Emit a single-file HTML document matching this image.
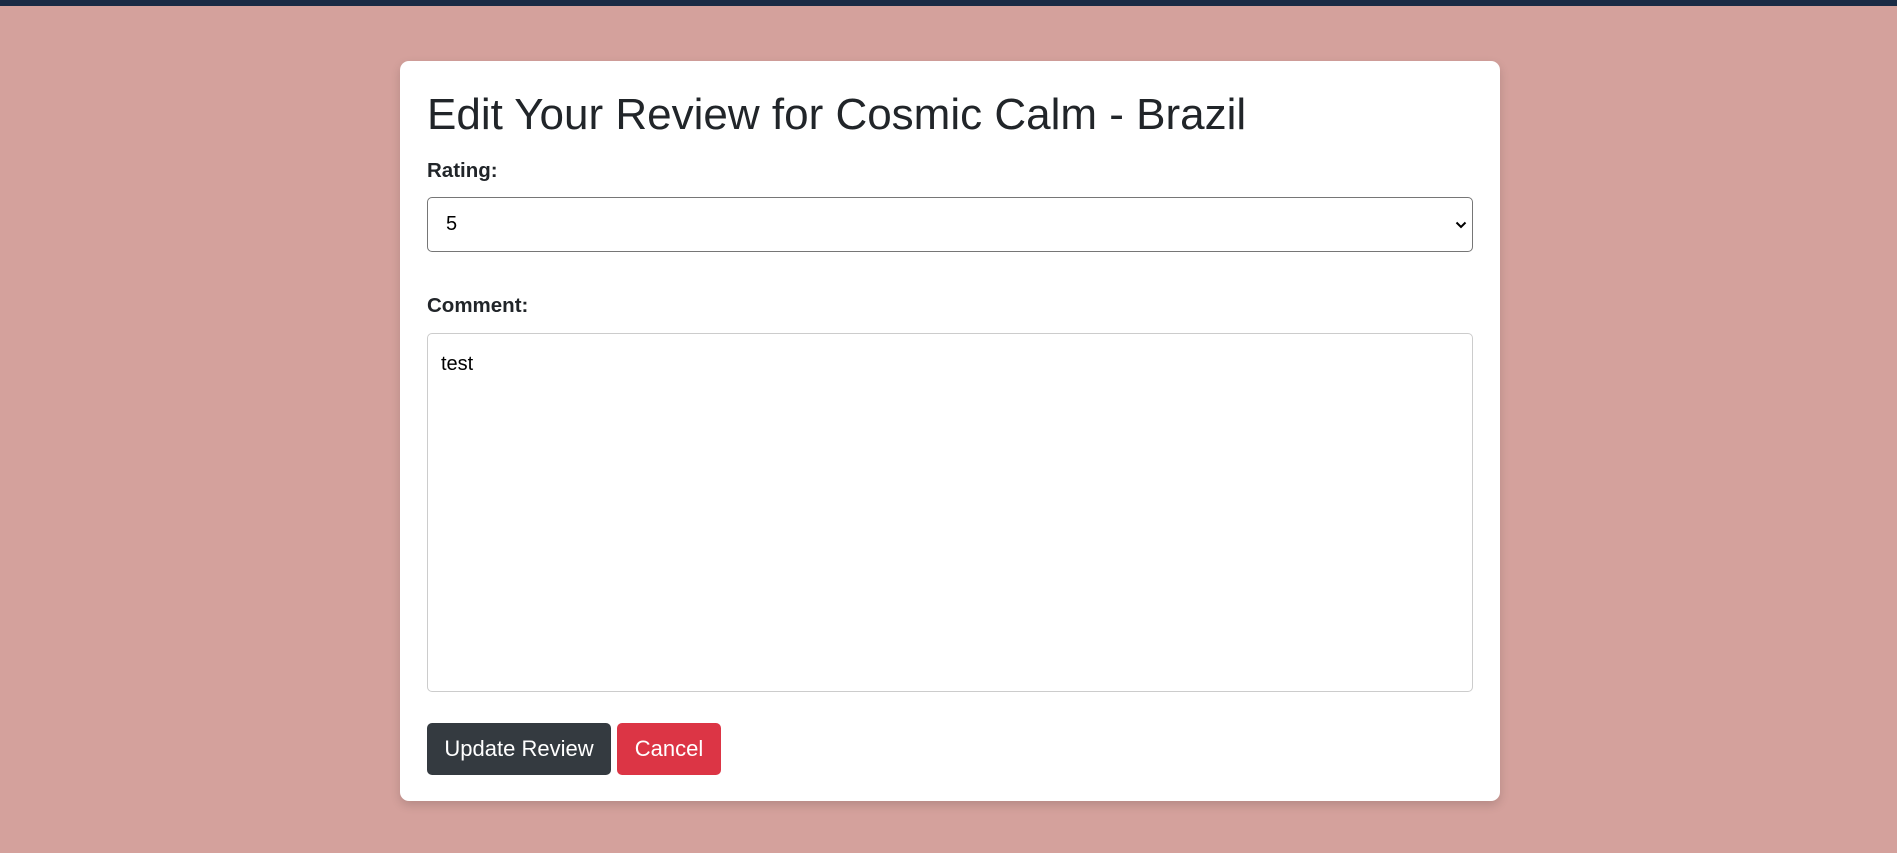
<!DOCTYPE html>
<html><head><style>
html,body{margin:0;padding:0;}
body{width:1897px;height:853px;background:#d4a19c;font-family:"Liberation Sans",Arial,sans-serif;color:#212529;position:relative;overflow:hidden;}
.top{position:absolute;left:0;top:0;width:1897px;height:6px;background:#1a2b45;}
.card{position:absolute;left:400px;top:61px;width:1100px;height:740px;background:#fff;border-radius:9px;box-shadow:0 4px 10px rgba(0,0,0,0.15);}
h1{position:absolute;left:27px;top:28px;margin:0;font-weight:400;font-size:44px;line-height:52px;white-space:nowrap;}
.lbl{position:absolute;left:27px;font-weight:700;font-size:20.5px;}
.sel{position:absolute;left:27px;top:136px;width:1046px;height:55px;border:1px solid #767676;border-radius:5px;box-sizing:border-box;}
.sel span{position:absolute;left:18px;top:15px;font-size:20px;color:#000;}
.sel svg{position:absolute;right:5px;top:23px;}
.ta{position:absolute;left:27px;top:272px;width:1046px;height:359px;border:1px solid #ccc;border-radius:5px;box-sizing:border-box;}
.ta span{position:absolute;left:13px;top:19px;font-size:20px;color:#000;}
.btn{position:absolute;top:662px;height:52px;border-radius:5px;color:#fff;font-size:22px;line-height:52px;text-align:center;white-space:nowrap;}
</style></head><body>
<div class="top"></div>
<div class="card">
<h1>Edit Your Review for Cosmic Calm - Brazil</h1>
<div class="lbl" style="top:98px">Rating:</div>
<div class="sel"><span>5</span><svg width="12" height="8" viewBox="0 0 12 8"><path d="M1.5 1.5 6 6 10.5 1.5" fill="none" stroke="#000" stroke-width="2"/></svg></div>
<div class="lbl" style="top:233px">Comment:</div>
<div class="ta"><span>test</span></div>
<div class="btn" style="left:27px;width:184px;background:#343a40">Update Review</div>
<div class="btn" style="left:217px;width:104px;background:#dc3545">Cancel</div>
</div>
</body></html>
